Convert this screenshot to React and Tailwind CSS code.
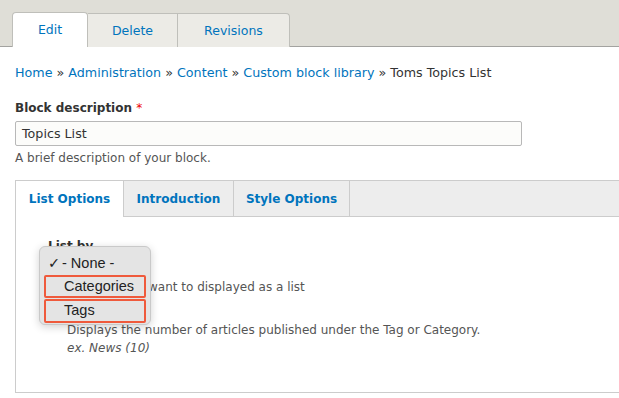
import React from "react";

export default function App() {
  const font = { fontFamily: '"DejaVu Sans", "Liberation Sans", sans-serif' };
  return (
    <div className="w-[619px] h-[398px] overflow-hidden bg-white relative text-[#333]" style={font}>
      {/* Header with tabs */}
      <div className="h-[47px] bg-[#dfded7] border-b border-[#a3a3a0] flex items-end pl-[12px]">
        <div className="flex items-end h-[35px] -mb-px">
          <div className="w-[76px] h-[35px] pt-[1px] bg-white border border-b-0 border-[#bfbfba] rounded-t-[4px] flex items-center justify-center text-[12.5px] text-[#0074bd]">Edit</div>
          <div className="w-[90px] h-[34px] pt-[1px] bg-[#ecebe6] border-t border-r border-[#bfbfba] flex items-center justify-center text-[12.5px] text-[#0074bd]">Delete</div>
          <div className="w-[112px] h-[34px] pt-[1px] bg-[#ecebe6] border-t border-r border-[#bfbfba] rounded-tr-[4px] flex items-center justify-center text-[12.5px] text-[#0074bd]">Revisions</div>
        </div>
      </div>

      <div className="pl-[15px]">
        {/* Breadcrumb */}
        <div className="mt-[18px] text-[12.7px] leading-[16px] whitespace-nowrap">
          <span className="text-[#0074bd]">Home</span> » <span className="text-[#0074bd]">Administration</span> » <span className="text-[#0074bd]">Content</span> » <span className="text-[#0074bd]">Custom block library</span> » <span className="text-[#333]">Toms Topics List</span>
        </div>

        {/* Block description */}
        <div className="mt-[19px] text-[12px] font-bold leading-[16px]">
          Block description <span className="text-[#e00] font-normal">*</span>
        </div>
        <div className="mt-[5px] w-[507px] h-[25px] border border-[#b8b8b8] rounded-[2px] bg-[#fcfcfa] text-[12.7px] flex items-center px-[6px]">
          Topics List
        </div>
        <div className="mt-[5px] text-[12px] leading-[15px] text-[#555]">A brief description of your block.</div>

        {/* Tabs box */}
        <div className="mt-[14px] w-[620px] h-[213px] border border-[#cccccc] border-r-0">
          <div className="flex h-[36px] bg-[#ededed] border-b border-[#cccccc]">
            <div className="w-[108px] h-[36px] bg-white border-r border-[#cccccc] flex items-center justify-center text-[12px] font-bold text-[#0074bd] -mb-px">List Options</div>
            <div className="w-[110px] border-r border-[#cccccc] flex items-center justify-center text-[12px] font-bold text-[#0074bd]">Introduction</div>
            <div className="w-[116px] border-r border-[#cccccc] flex items-center justify-center text-[12px] font-bold text-[#0074bd]">Style Options</div>
            <div className="flex-1" />
          </div>
          <div className="pl-[32px] pt-[21px]">
            <div className="text-[12px] font-bold leading-[16px]">List by</div>
            <div className="mt-[2px] w-[103px] h-[19px] rounded-[4px] bg-[#1a73e8]" />
            <div className="mt-[5px] text-[12px] leading-[15px] text-[#555] whitespace-nowrap">
              <span className="invisible">Select what you </span>want to displayed as a list
            </div>
            <div className="mt-[6px] h-[16px]" />
            <div className="pl-[19px] mt-[4px] text-[12px] leading-[18px] text-[#555]">
              <div>Displays the number of articles published under the Tag or Category.</div>
              <div className="italic">ex. News (10)</div>
            </div>
          </div>
        </div>
      </div>

      {/* Native select popup */}
      <div
        className="absolute left-[39px] top-[246px] w-[112px] h-[79px] rounded-[6px] bg-[#e4e4e4] border border-[#c9c9c9] shadow-[0_2px_8px_rgba(0,0,0,0.18)] text-[14.5px] text-[#222] pt-[6px] px-[4px]"
        style={{ fontFamily: '"Liberation Sans", "DejaVu Sans", sans-serif' }}
      >
        <div className="h-[22px] flex items-center pl-[4px]"><span className="w-[14px]">✓</span><span>- None -</span></div>
        <div className="h-[23px] flex items-center pl-[18px] border-2 border-[#ef5a3c] rounded-[2px]">Categories</div>
        <div className="h-[24px] flex items-center pl-[18px] border-2 border-[#ef5a3c] rounded-[2px] mt-[1px]">Tags</div>
      </div>
    </div>
  );
}
